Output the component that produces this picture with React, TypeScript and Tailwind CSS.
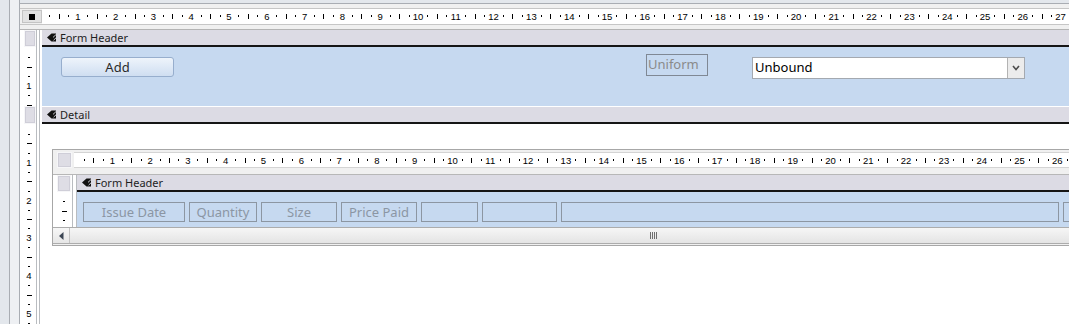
import React from "react";

const CM = 37.8;

function HRuler({ origin, count, labels }: { origin: number; count: number; labels: number }) {
  const els: React.ReactNode[] = [];
  for (let n = 0; n <= count; n++) {
    const b = origin + n * CM;
    if (n > 0 && n <= labels)
      els.push(
        <text key={`n${n}`} x={b} y={11} textAnchor="middle">
          {n}
        </text>
      );
    els.push(<rect key={`a${n}`} x={Math.round(b + CM / 4)} y={6} width={1} height={2} />);
    els.push(<rect key={`b${n}`} x={Math.round(b + CM / 2)} y={5} width={1} height={5} />);
    els.push(<rect key={`c${n}`} x={Math.round(b + (3 * CM) / 4)} y={6} width={1} height={2} />);
  }
  return (
    <svg className="block w-full h-full font-['Liberation_Sans',sans-serif] text-[9.5px]" fill="#000">
      {els}
    </svg>
  );
}

function VRuler({ origin, count, labels, cx }: { origin: number; count: number; labels: number; cx: number }) {
  const els: React.ReactNode[] = [];
  for (let n = 0; n <= count; n++) {
    const b = origin + n * CM;
    if (n > 0 && n <= labels)
      els.push(
        <text key={`n${n}`} x={cx} y={b + 3.5} textAnchor="middle">
          {n}
        </text>
      );
    els.push(<rect key={`a${n}`} x={cx - 1} y={Math.round(b + CM / 4)} width={2} height={1} />);
    els.push(<rect key={`b${n}`} x={cx - 2} y={Math.round(b + CM / 2)} width={5} height={1} />);
    els.push(<rect key={`c${n}`} x={cx - 1} y={Math.round(b + (3 * CM) / 4)} width={2} height={1} />);
  }
  return (
    <svg className="block w-full h-full font-['Liberation_Sans',sans-serif] text-[9.5px]" fill="#000">
      {els}
    </svg>
  );
}

function SectionIcon() {
  return (
    <svg width="9" height="9" viewBox="0 0 9 9" className="shrink-0">
      <path d="M0 4.5 L4.5 0.5 H9 V8.5 H4.5 Z" fill="#111" />
      <path d="M9 1.6 L6 4.4 M9 4.8 L6.6 7.2" stroke="#dcdbe4" strokeWidth="0.9" />
    </svg>
  );
}

function Bar({ label }: { label: string }) {
  return (
    <div className="h-[17px] bg-[#dcdbe4] border-b-2 border-[#151515] flex items-center gap-[4px] pl-[5px] text-[11px] leading-none text-[#1e1e1e] whitespace-nowrap">
      <SectionIcon />
      <span>{label}</span>
    </div>
  );
}

/* left column of the main designer: 16px ruler area + double line + 2px white */
function LeftCol({ children }: { children?: React.ReactNode }) {
  return (
    <div className="w-[22px] shrink-0 flex bg-white">
      <div className="w-[16px] shrink-0 relative">{children}</div>
      <div className="w-[4px] shrink-0 border-x border-[#b9bcc0]" />
      <div className="w-[2px] shrink-0" />
    </div>
  );
}

function SubLeftCol({ children }: { children?: React.ReactNode }) {
  return (
    <div className="w-[24px] shrink-0 flex bg-white">
      <div className="w-[19px] shrink-0">{children}</div>
      <div className="w-[5px] shrink-0 border-x border-[#b9bcc0]" />
    </div>
  );
}

function SelectorBox({ w, ml }: { w: string; ml: string }) {
  return <div className={`${ml} ${w} h-full bg-[#dedde5] border border-[#f6f6f8] shadow-[inset_0_0_0_1px_#cfced8]`} />;
}

const fields: { label: string; w: string }[] = [
  { label: "Issue Date", w: "w-[102px]" },
  { label: "Quantity", w: "w-[68px]" },
  { label: "Size", w: "w-[76px]" },
  { label: "Price Paid", w: "w-[76px]" },
  { label: "", w: "w-[57px]" },
  { label: "", w: "w-[75px]" },
  { label: "", w: "w-[498px]" },
  { label: "", w: "w-[100px]" },
];

export default function App() {
  return (
    <div className="w-[1069px] h-[324px] overflow-hidden flex bg-[#e3e7ec] font-['Noto_Sans',sans-serif] text-[#1e1e1e]">
      <div className="w-[9px] shrink-0" />
      <div className="w-[11px] shrink-0 border-x border-[#a9adb3] bg-[#eef0f3]" />
      <div className="flex-1 min-w-0 flex flex-col">
        <div className="h-[3px] shrink-0" />
        <div className="h-[5px] shrink-0 border-t border-[#a9adb3] bg-[#f0f0f0]" />
        {/* top ruler */}
        <div className="h-[17px] shrink-0 flex bg-[#f0f0f0] border-y border-[#c6c6c6]">
          <div className="w-[22px] shrink-0 flex items-center pl-[2px]">
            <div className="w-[20px] h-[13px] bg-[#e2e2e2] border border-[#c4c4c4] flex items-center justify-center">
              <div className="w-[6px] h-[6px] bg-black" />
            </div>
          </div>
          <div className="flex-1 bg-white">
            <HRuler origin={-2} count={28} labels={27} />
          </div>
        </div>
        <div className="h-[5px] shrink-0 bg-[#f0f0f0] border-b border-[#b4b4b4]" />
        {/* Form Header bar */}
        <div className="h-[17px] shrink-0 flex">
          <LeftCol>
            <SelectorBox ml="ml-[4px]" w="w-[12px]" />
          </LeftCol>
          <div className="flex-1 min-w-0">
            <Bar label="Form Header" />
          </div>
        </div>
        {/* Form Header body */}
        <div className="h-[59px] shrink-0 flex">
          <LeftCol>
            <VRuler origin={1} count={1} labels={1} cx={9} />
          </LeftCol>
          <div className="flex-1 min-w-0 bg-[#c6d9f0] flex items-start">
            <div className="ml-[19px] mt-[10px] w-[113px] h-[20px] rounded-[3px] border border-[#97aecd] bg-linear-to-b from-[#eef4fb] to-[#cfdef1] flex items-center justify-center text-[13px] text-[#2a2a2a] leading-none">
              Add
            </div>
            <div className="ml-[472px] mt-[7px] w-[62px] h-[22px] border border-[#7f8894] text-[13px] leading-[18px] text-[#8a8a8a] pl-[1px]">
              Uniform
            </div>
            <div className="ml-[44px] mt-[10px] w-[273px] h-[22px] border border-[#a4a9b0] bg-white flex">
              <div className="flex-1 text-[13px] leading-[19px] text-black pl-[2px]">Unbound</div>
              <div className="w-[17px] h-full border-l border-[#b3b3b3] bg-[#ececec] flex items-center justify-center">
                <svg width="8" height="6" viewBox="0 0 8 6">
                  <polyline points="1,1 4,4.5 7,1" fill="none" stroke="#4d4d4d" strokeWidth="1.6" />
                </svg>
              </div>
            </div>
          </div>
        </div>
        {/* Detail bar */}
        <div className="h-[18px] shrink-0 flex">
          <LeftCol>
            <SelectorBox ml="ml-[4px]" w="w-[12px]" />
          </LeftCol>
          <div className="flex-1 min-w-0 border-t border-white">
            <Bar label="Detail" />
          </div>
        </div>
        {/* Detail body */}
        <div className="flex-1 flex min-h-0">
          <LeftCol>
            <VRuler origin={0.5} count={5} labels={5} cx={9} />
          </LeftCol>
          <div className="flex-1 min-w-0 bg-white">
            <div className="ml-[10px] mt-[25px] w-[1040px] border border-[#a7a7a7] bg-[#f0f0f0] pt-[2px] flex flex-col">
              {/* sub ruler */}
              <div className="h-[16px] flex">
                <div className="w-[21px] shrink-0 pl-[4px]">
                  <div className="w-[15px] h-[16px] bg-[#dedde5] border border-[#f6f6f8] shadow-[inset_0_0_0_1px_#cfced8]" />
                </div>
                <div className="flex-1 bg-white border-y border-[#d4d4d4]">
                  <HRuler origin={0.5} count={27} labels={26} />
                </div>
              </div>
              <div className="h-[7px] border-b border-[#b7b7b7]" />
              {/* sub Form Header bar */}
              <div className="h-[17px] flex">
                <SubLeftCol>
                  <SelectorBox ml="ml-[4px]" w="w-[14px]" />
                </SubLeftCol>
                <div className="flex-1 min-w-0">
                  <Bar label="Form Header" />
                </div>
              </div>
              {/* sub body */}
              <div className="h-[35px] flex">
                <SubLeftCol>
                  <VRuler origin={0} count={1} labels={0} cx={11} />
                </SubLeftCol>
                <div className="flex-1 min-w-0 bg-[#c6d9f0] flex items-start gap-[4px] pl-[6px] pt-[10px]">
                  {fields.map((f, i) => (
                    <div
                      key={i}
                      className={`${f.w} shrink-0 h-[20px] border border-[#8c96a2] text-[13px] leading-[18px] text-[#8b96a4] text-center whitespace-nowrap`}
                    >
                      {f.label}
                    </div>
                  ))}
                </div>
              </div>
              {/* scrollbar */}
              <div className="h-[17px] flex border-y border-[#acacac]">
                <div className="w-[17px] shrink-0 border-r border-[#c4c4c4] bg-linear-to-b from-[#f7f7f7] to-[#e6e6e6] flex items-center justify-center">
                  <svg width="5" height="8" viewBox="0 0 5 8">
                    <path d="M4.5 0 L0 4 L4.5 8 Z" fill="#3c4654" />
                  </svg>
                </div>
                <div className="flex-1 bg-linear-to-b from-[#f6f6f6] to-[#e4e4e4] flex items-center pl-[580px]">
                  <div className="flex gap-[1px]">
                    <div className="w-[1px] h-[7px] bg-[#6f6f6f]" />
                    <div className="w-[1px] h-[7px] bg-[#6f6f6f]" />
                    <div className="w-[1px] h-[7px] bg-[#6f6f6f]" />
                    <div className="w-[1px] h-[7px] bg-[#6f6f6f]" />
                  </div>
                </div>
              </div>
              <div className="h-[1px]" />
            </div>
          </div>
        </div>
      </div>
    </div>
  );
}
